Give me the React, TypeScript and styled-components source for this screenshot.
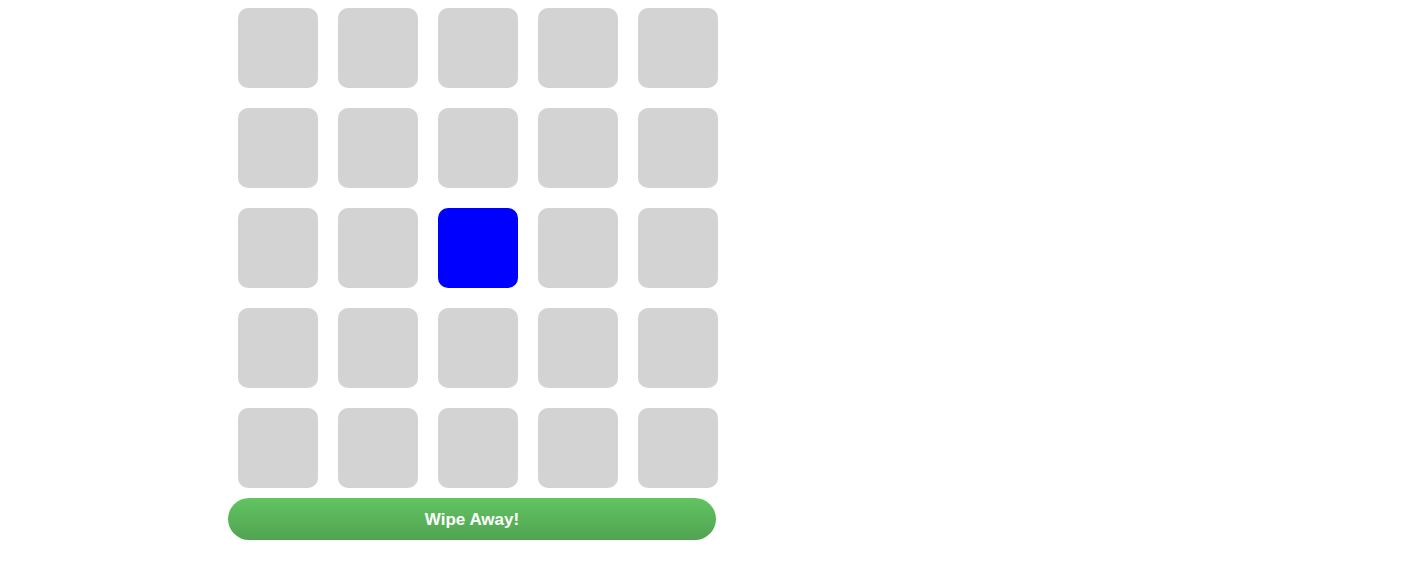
import React from "react";
import styled, { createGlobalStyle } from "styled-components";

const GlobalStyle = createGlobalStyle`
  body {
    margin: 0;
    background: #ffffff;
    font-family: "Liberation Sans", Arial, sans-serif;
  }
`;

const Page = styled.div`
  padding: 8px 0 0 228px;
  width: 500px;
`;

const Grid = styled.div`
  display: grid;
  grid-template-columns: repeat(5, 80px);
  gap: 20px;
  padding: 0 10px;
`;

const Cell = styled.div<{ $active?: boolean }>`
  width: 80px;
  height: 80px;
  border-radius: 10px;
  background: ${(p) => (p.$active ? "#0000ff" : "#d3d3d3")};
`;

const WipeButton = styled.button`
  display: block;
  margin-top: 10px;
  width: 488px;
  height: 42px;
  border: none;
  border-radius: 21px;
  background: linear-gradient(to bottom, #62c462, #51a351);
  color: #ffffff;
  font-family: "Liberation Sans", Arial, sans-serif;
  font-size: 17px;
  font-weight: 700;
  line-height: 44px;
  cursor: pointer;
  padding: 0;
`;

const ACTIVE = 12;

export default function App() {
  return (
    <>
      <GlobalStyle />
      <Page>
        <Grid>
          {Array.from({ length: 25 }, (_, i) => (
            <Cell key={i} $active={i === ACTIVE} />
          ))}
        </Grid>
        <WipeButton>Wipe Away!</WipeButton>
      </Page>
    </>
  );
}
